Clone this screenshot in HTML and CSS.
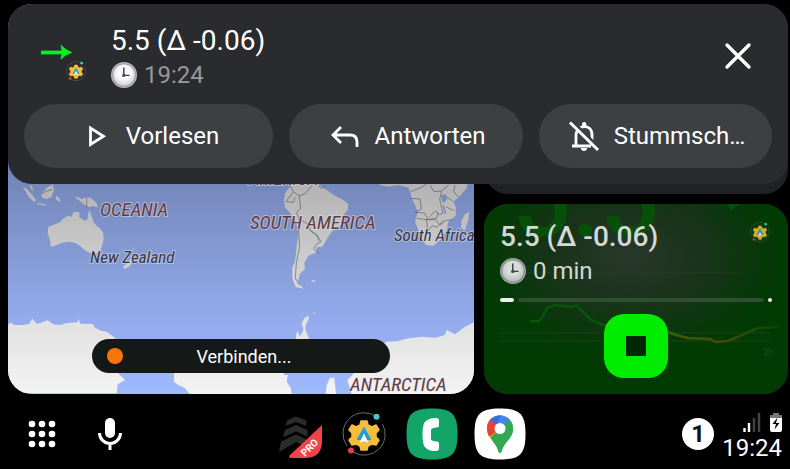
FILE: index.html
```
<!DOCTYPE html>
<html lang="de">
<head>
<meta charset="utf-8">
<meta name="viewport" content="width=device-width, initial-scale=1">
<title>Auto</title>
<link rel="stylesheet" href="styles.css">
</head>
<body>
<svg class="sprite" aria-hidden="true">
  <defs>
    <radialGradient id="face" cx=".5" cy=".4" r=".6">
      <stop offset=".5" stop-color="#fafafc"/><stop offset="1" stop-color="#d0cfd8"/>
    </radialGradient>
  </defs>
  <symbol id="clock" viewBox="0 0 26 26">
    <circle cx="13" cy="13" r="13" fill="#b9b9bd"/>
    <circle cx="13" cy="13" r="11.6" fill="#8b8b91"/>
    <circle cx="13" cy="13" r="10.8" fill="url(#face)"/>
    <path d="M12.8 6v7.4H18" fill="none" stroke="#3c3c40" stroke-width="1.4" stroke-linecap="round"/>
    <circle cx="12.8" cy="13.4" r="1.7" fill="#4b4b4f"/>
  </symbol>
  <symbol id="gear" viewBox="0 0 44 44">
    <path d="M34.5 4.8A21 21 0 0 0 5 34M11 40A21 21 0 0 0 40.500 12" fill="none" stroke="#6b6b6b" stroke-width="1"/>
    <path d="M19 9h6l1 4 4 2 4-2 3 5-3 3v4l3 3-3 5-4-1-4 2-1 4h-6l-1-4-4-2-4 1-3-5 3-3v-4l-3-3 3-5 4 2 4-2z" fill="#f5bd3d" stroke="#f5bd3d" stroke-width="1.500" stroke-linejoin="round"/>
    <path d="M22 14.500 29.500 28h-4.800L22 22.500 19.300 28h-4.800z" fill="#1d9fd6"/>
    <path d="M22 21.500 26.500 31 22 29l-4.500 2z" fill="#fff"/>
    <circle cx="34.500" cy="4.800" r="3" fill="#41c9cf"/>
    <circle cx="9" cy="38.500" r="3" fill="#d7434a"/>
  </symbol>
</svg>

<main class="dashboard">
  <section class="map" aria-label="Karte">
    <svg class="map-art" viewBox="8 4 466 390" preserveAspectRatio="xMidYMid slice">
      <defs>
        <linearGradient id="shade" x1="0" y1="0" x2="0" y2="1">
          <stop offset=".4" stop-color="#000" stop-opacity=".3"/>
          <stop offset=".8" stop-color="#000" stop-opacity=".08"/>
          <stop offset="1" stop-color="#000" stop-opacity="0"/>
        </linearGradient>
      </defs>
      <path d="M8 4h466v390H8z" fill="#9fb9ff"/>
      <g transform="translate(0 175) scale(.33333)" fill="#f3f3f3">
        <path d="M145 156l20-8 15-6 10-12 15-8 10 3 5-13 15-2 5 8-4 6 14 11 12 1 2-18 4-13 8 20 4 15 10 12 10 8 10 15 1 20-6 20-7 17-13 6-20-6-15-10-10-10-12-7-18-5-25 3-20 9-13 3-2-20-7-20z"/>
        <path d="M222 65l13 2 10 5 15-6 15 4 15 15 3 13-13-6-12 4-13-6-15-12zM124 58l16-20 18-10 4 17-7 20-15 7-14-4zM68 35l14 7 13 16 13 17-4 7-16-14zM110 84l26 4 2 4-26-4zM168 62l8 5 6 10-4 3-10-6zM88 30l8 4 4 14-6-4z"/>
        <path d="M397 240l8 8-8 10-8 16-16 8-4-6 16-13zM397 216l6 6-3 2z"/>
        <path d="M24 448l10-5 8 7h28l18-4 9-15 13 15 14-3 19-7 17 12 20 2 20-6 32-2 3-11 6 15 37 1 7 11 20 10 15 2 25 18 6 40 6 70 19 17-23 13-3 27H24z"/>
        <path d="M522 560h330v40h12l-4 20 13 20 2 20H572l-17-20-20-10-13-10z"/>
        <path d="M260 66v30M126 56l14-8 16-4" fill="none" stroke="#777" stroke-width="2"/>
      </g>
      <g transform="translate(235 175) scale(.33333)" fill="#f3f3f3">
        <path d="M150 55l15-20V10h80l8 20 22 15 25 17 25 13 15 13-2 17-13 15-7 30-28 20-10 15-18 30-17 2-2 16-21 8-14 22 2 18-15 15-7 25 6 8 13 12-25-5-10-25v-35l8-15 4-40 6-50-8-35-15-20-17-20-3-20z"/>
        <path d="M435 10v20l25 5 30-5 20 5 10 3 7 17 3 15 10 20 8 20-8 30 12 30 13 25 7 15 23 2 20-17 20-30 5-25 22-18V95l-7-15 17-15 23-25 6-30zM690 118l13-8-3 25-10 30-12-5 2-25zM230 316h10v4h-10z"/>
        <path d="M183 520v-40l5-12 7 17 10-20-5-20 8-15 12-8 2 8-10 20v15l12 30v25zM235 413l7-3-4 7zM272 657l3-27 10-22h13l5 49zM337 615l18-18v-40l100-57 35-2 30-8 40-5 40 3 30-8 5-15 25 13 30-23 40-20v223H350l-5-17z"/>
        <path d="M165 30l10 20 18 12 17-5 20-25M175 50l-22 30 22 2 5-15M193 62l4 38-12 12 8 22 25 12 8 20 20 14 12 20-14 8-8 14 17 14M193 134l-2 40 3 40-10 50-3 45 12 22M250 32l12 8 8-8M225 166l22 18 5 15M527 50l30-12 18-11M527 70l28 2 4 30-18 10 28 2 10 20h22l14 16 18-14 18-2M585 30l12 20 22-2 22-18M620 48l-6 25 10 42-12 4-10-12-20 20M634 96l22 10M545 130l30 4 30-4 4-18M575 134l3 34 14-16 14 4 20-20M660 30l-4 20 14 16M578 168l-10 20M635 66l18 12" fill="none" stroke="#777" stroke-width="2"/>
        <path d="M619 60l14-2 4 14-10 12-8-8zM622 90l6 2 6 24-5 2z" fill="#9fb9ff"/>
      </g>
      <path d="M8 4h466v390H8z" fill="url(#shade)"/>
      <g class="place region">
        <text x="100" y="216">OCEANIA</text>
        <text x="249" y="185">AMERICA</text>
        <text x="250" y="229">SOUTH AMERICA</text>
        <text x="350" y="391">ANTARCTICA</text>
      </g>
      <g class="place">
        <text x="90" y="263">New Zealand</text>
        <text x="394" y="241">South Africa</text>
      </g>
    </svg>
    <div class="status-pill" role="status"><span class="dot"></span><span class="pill-text">Verbinden...</span></div>
  </section>

  <div class="side">
    <section class="card"></section>
    <section class="card media">
      <svg class="graph" viewBox="484 204 304 190" preserveAspectRatio="xMidYMid slice" aria-hidden="true">
        <defs>
          <radialGradient id="glow" cx=".48" cy=".28" r=".5">
            <stop offset="0" stop-color="#29382a"/><stop offset=".5" stop-color="#18331a"/><stop offset="1" stop-color="#023a03"/>
          </radialGradient>
          <linearGradient id="trend" gradientUnits="userSpaceOnUse" x1="668" y1="0" x2="786" y2="0">
            <stop offset="0" stop-color="#3c6006"/><stop offset=".4" stop-color="#4b4a08"/><stop offset=".75" stop-color="#1c4c05"/><stop offset="1" stop-color="#063f05"/>
          </linearGradient>
        </defs>
        <path d="M484 204h304v190H484z" fill="url(#glow)"/>
        <text class="reading" x="512" y="236">5.5</text>
        <path d="M729 208l10-6" stroke="#08500a" stroke-width="5"/>
        <path d="M500 273h240M500 333h270M500 341h270" stroke="#2c492d" stroke-width="1" opacity=".6"/>
        <path d="M530 321h9l4-5 4-8 8-3 18 2 3-2 7 7 8 8 12 5 10 1" fill="none" stroke="#07560b" stroke-width="2.500"/>
        <path d="M668 332l8 3 12 3 22 1 6 3 12-1 14-6 16-7 22-1" fill="none" stroke="url(#trend)" stroke-width="2.500"/>
        <text class="range" x="763" y="356">2h</text>
      </svg>
      <div class="media-head">
        <h2 class="title strong">5.5 (Δ -0.06)</h2>
        <svg class="badge"><use href="#gear"/></svg>
      </div>
      <p class="meta"><svg class="clock"><use href="#clock"/></svg>0 min</p>
      <div class="progress" role="progressbar" aria-label="Fortschritt" aria-valuenow="5">
        <span class="played"></span><span class="rest"></span><span class="end"></span>
      </div>
      <button class="stop" aria-label="Stopp"><span class="stop-mark"></span></button>
    </section>
  </div>
</main>

<aside class="notice">
  <header class="notice-head">
    <div class="source">
      <svg class="arrow" viewBox="0 0 32 14"><path d="M1 7.500h24" stroke="#00f51c" stroke-width="3.800"/><path d="M21 0.500Q25 5 31.500 7.500 25 9.500 21 14L22.500 7.500z" fill="#00f51c" stroke="#00f51c"/></svg>
      <svg class="badge source-app"><use href="#gear"/></svg>
    </div>
    <div class="notice-text">
      <h1 class="title">5.5 (Δ -0.06)</h1>
      <p class="meta muted"><svg class="clock"><use href="#clock"/></svg>19:24</p>
    </div>
    <button class="close" aria-label="Schließen">
      <svg viewBox="0 0 28 28"><path d="M3 3l22 22M25 3L3 25" stroke="#fff" stroke-width="3.400" stroke-linecap="round"/></svg>
    </button>
  </header>
  <div class="actions">
    <button class="action">
      <svg viewBox="0 0 32 32"><path d="M10.500 8v16.500L23.500 16.200z" fill="none" stroke="#fff" stroke-width="2.800"/></svg>Vorlesen
    </button>
    <button class="action">
      <svg viewBox="0 0 32 32"><path d="M13 7L5 15l8 8M5 15h17q7 0 7 7v5" fill="none" stroke="#fff" stroke-width="2.800"/></svg>Antworten
    </button>
    <button class="action">
      <svg viewBox="0 0 32 32"><path d="M4 26h19M8 26V15q0-3 2-5M12 8q3-2 7-1 5 1.500 5 8v6" fill="none" stroke="#fff" stroke-width="2.800"/><path d="M14 5q0-3 2.200-3t2.200 3v2H14zM13 28h6q0 3-3 3t-3-3z" fill="#fff"/><path d="M4 1L32 28.500" stroke="#3c4043" stroke-width="3"/><path d="M2 2.500L30 30" stroke="#fff" stroke-width="3"/></svg>Stummsch…
    </button>
  </div>
</aside>

<nav class="taskbar">
  <div class="tools">
    <button class="tool" aria-label="Apps">
      <svg viewBox="0 0 28 28" fill="#fff"><circle cx="4" cy="4" r="3.300"/><circle cx="14" cy="4" r="3.300"/><circle cx="24" cy="4" r="3.300"/><circle cx="4" cy="14" r="3.300"/><circle cx="14" cy="14" r="3.300"/><circle cx="24" cy="14" r="3.300"/><circle cx="4" cy="24" r="3.300"/><circle cx="14" cy="24" r="3.300"/><circle cx="24" cy="24" r="3.300"/></svg>
    </button>
    <button class="tool mic" aria-label="Sprachsuche">
      <svg viewBox="0 0 24 32"><rect x="7" y="0" width="10" height="20" rx="5" fill="#fff"/><path d="M1.500 15a10.500 10.500 0 0 0 21 0M12 25v7" fill="none" stroke="#fff" stroke-width="3"/></svg>
    </button>
  </div>
  <div class="apps">
    <button class="app" aria-label="Navigation Pro">
      <svg viewBox="6 -2 48 48">
        <path d="M24 4.500l10.500 4v5.500L24 10l-10.500 4 1.500-5.500zM24 13l11.500 5v6.500L24 19.500 11 25.500l2-7.500zM24 22.500L38 29l1 8-15-7L7 40l2-10.500z" fill="#2b2b2b"/>
        <path d="M50 13v16q0 17-17 17H19q-3 0-1-3z" fill="#f04349"/>
        <text class="pro" x="40" y="38" transform="rotate(-45 40 38)">PRO</text>
      </svg>
    </button>
    <button class="app" aria-label="Automatisierung"><svg viewBox="2 0 48 48"><use href="#gear" x="2" y="2" width="44" height="44"/></svg></button>
    <button class="app large" aria-label="Telefon">
      <svg viewBox="0 0 52 52"><path d="M26 .5C46 .5 51.500 6 51.500 26S46 51.500 26 51.500.5 46 .5 26 6 .5 26 .5z" fill="#12a567"/><path d="M29 10h1q3 0 3 3v4.500q0 2-2 2-6 .5-6 2.500v9q0 2 6 2.500 2 0 2 2V40q0 3-3 3h-1q-7 0-10.500-4.500-2-3-2-12t2-12Q22 10 29 10z" fill="#fff"/></svg>
    </button>
    <button class="app large" aria-label="Karten">
      <svg viewBox="0 0 52 52">
        <clipPath id="pin"><path d="M26 7.500c-7.500 0-13 5.500-13 13C13 31 22 33 24.500 43.500q1.500 3.500 3 0C30 33 39 31 39 20.500c0-7.500-5.500-13-13-13z"/></clipPath>
        <path d="M26 .5C46 .5 51.500 6 51.500 26S46 51.500 26 51.500.5 46 .5 26 6 .5 26 .5z" fill="#fff"/>
        <g clip-path="url(#pin)"><path d="M8 4h36v44H8z" fill="#33a853"/><path d="M8 38L44 0H8z" fill="#f9bb0b"/><path d="M8 38L26 20 14 9 8 18z" fill="#f9bb0b"/><path d="M10 27.500L17 28l9-8-10-9-8 6z" fill="#e74335"/><path d="M16 11.500l10 9L37 10 28 3z" fill="#4285f4"/><path d="M16 11.500l6 5.500 6-11-8-2z" fill="#3270d8"/><path d="M17 36L42 9v35H20z" fill="#33a853"/></g>
        <circle cx="26" cy="20.500" r="5.500" fill="#fff"/>
      </svg>
    </button>
  </div>
  <div class="status">
    <span class="count">1</span>
    <div class="status-info">
      <div class="indicators">
        <svg class="signal" viewBox="0 0 18 19"><path d="M1.500 15v4M6 10v9" stroke="#fff" stroke-width="2.400"/><path d="M11 5v14M16 0v19" stroke="#444" stroke-width="2.400"/></svg>
        <svg class="battery" viewBox="0 0 12 19"><path d="M3 0h6v2h3v4H0V2h3z" fill="#777"/><path d="M0 5h12v12q0 2-2 2H2q-2 0-2-2z" fill="#fff"/><path d="M7.500 4.500L2.500 11H6l-1.500 5.500L9.500 10H6z" fill="#000"/></svg>
      </div>
      <time class="time">19:24</time>
    </div>
  </div>
</nav>
</body>
</html>
```
FILE: styles.css
```
* { box-sizing: border-box; }

body {
  margin: 0;
  min-height: 100vh;
  display: flex;
  flex-direction: column;
  background: #000;
  color: #fff;
  font-family: Roboto, "Noto Sans", sans-serif;
}

h1, h2, p { margin: 0; }

button {
  border: 0;
  padding: 0;
  background: none;
  color: inherit;
  font: inherit;
}

svg { display: block; }
.sprite { position: absolute; width: 0; height: 0; }

/* Dashboard */
.dashboard {
  flex: 1;
  display: grid;
  grid-template-columns: 466fr 304fr;
  gap: 10px;
  padding: 4px 2px 0 8px;
}

.map {
  position: relative;
  display: flex;
  align-items: flex-end;
  justify-content: center;
  padding-bottom: 21px;
  border-radius: 24px;
  overflow: hidden;
}

.map-art {
  position: absolute;
  inset: 0;
  width: 100%;
  height: 100%;
}

.place {
  font-family: "Roboto Condensed", "Liberation Sans Narrow", Roboto, sans-serif;
  font-size: 17px;
  font-style: italic;
  fill: #35373f;
  stroke: rgba(225, 225, 235, .5);
  stroke-width: 2px;
  paint-order: stroke;
}

.region { font-size: 19px; fill: #623a40; }

.status-pill {
  position: relative;
  display: flex;
  align-items: center;
  width: 64%;
  height: 34px;
  padding: 0 25px 0 15px;
  border-radius: 17px;
  background: #141817;
  font-size: 18px;
}

.dot {
  width: 16px;
  height: 16px;
  border-radius: 50%;
  background: #f8750c;
}

.pill-text { flex: 1; text-align: center; }

.side {
  display: grid;
  grid-template-rows: 1fr 1fr;
  gap: 10px;
}

.card {
  position: relative;
  border-radius: 24px;
  background: #202124;
  overflow: hidden;
}

.media {
  display: flex;
  flex-direction: column;
  padding: 16px;
  color: #d5d8d5;
}

.media .clock, .media .badge { opacity: .85; }

.graph {
  position: absolute;
  inset: 0;
  width: 100%;
  height: 100%;
}

.reading { font-size: 104px; font-weight: 500; fill: #08500a; }
.range { font-size: 10px; fill: #1d4a1e; }

.media-head {
  position: relative;
  display: flex;
  justify-content: space-between;
  align-items: center;
  padding-right: 2px;
}

.title {
  font-size: 28px;
  font-weight: 400;
  line-height: 34px;
}

.strong { font-weight: 500; }

.media-head .badge { align-self: flex-start; margin-top: 2px; }

.meta {
  position: relative;
  display: flex;
  align-items: center;
  gap: 7px;
  font-size: 24px;
  line-height: 34px;
}

.muted { color: #96999d; }
.clock { width: 26px; height: 26px; }
.badge { width: 20px; height: 20px; }

.progress {
  position: relative;
  display: flex;
  gap: 4px;
  height: 4px;
  margin-top: 10px;
}

.progress span { border-radius: 2px; background: #eef2ee; }
.played { width: 14px; }
.progress .rest { flex: 1; background: #2e502f; }
.end { width: 4px; }

.stop {
  position: relative;
  display: grid;
  place-items: center;
  align-self: center;
  width: 64px;
  height: 64px;
  margin-top: 12px;
  border-radius: 20px;
  background: #00ec00;
}

.stop-mark { width: 20px; height: 20px; background: #002800; }

/* Notification lying over the dashboard */
.notice {
  position: absolute;
  top: 4px;
  left: 8px;
  right: 2px;
  padding: 20px 16px 16px;
  border-radius: 24px;
  background: #2a2b2f;
}

.notice-head {
  display: flex;
  align-items: flex-start;
  padding: 0 20px 0 16px;
}

.source {
  display: flex;
  flex-direction: column;
  width: 71px;
  padding-top: 21px;
  gap: 2px;
}

.arrow { width: 32px; height: 14px; }
.source-app { margin-left: 26px; }
.notice-text { flex: 1; height: 80px; }

.close { padding-top: 18px; }
.close svg { width: 28px; height: 28px; }

.actions {
  display: grid;
  grid-template-columns: 249fr 234fr 233fr;
  gap: 16px;
}

.action {
  display: flex;
  align-items: center;
  justify-content: center;
  gap: 14px;
  height: 64px;
  padding-left: 2px;
  border-radius: 32px;
  background: #3c4043;
  font-size: 24px;
}

.action svg { width: 32px; height: 32px; }

/* Taskbar */
.taskbar {
  display: flex;
  align-items: center;
  justify-content: space-between;
  height: 75px;
  padding: 5px 8px 0 28px;
}

.tools { display: flex; align-items: center; gap: 42px; }
.tool svg { width: 28px; height: 28px; }
.mic svg { width: 24px; height: 32px; }

.apps { display: flex; align-items: center; gap: 16px; }
.app svg { width: 48px; height: 48px; overflow: visible; }
.large svg { width: 52px; height: 52px; }

.pro {
  font-size: 10px;
  font-weight: 700;
  text-anchor: middle;
  fill: #fff;
}

.status { display: flex; align-items: center; gap: 8px; }

.count {
  display: grid;
  place-items: center;
  width: 32px;
  height: 32px;
  border-radius: 50%;
  background: #fff;
  color: #111;
  font-size: 24px;
  font-weight: 700;
}

.status-info { padding-top: 8px; }
.indicators { display: flex; justify-content: flex-end; gap: 9px; }
.signal { width: 18px; height: 19px; }
.battery { width: 12px; height: 19px; }
.time { display: block; font-size: 24px; line-height: 32px; }
```
